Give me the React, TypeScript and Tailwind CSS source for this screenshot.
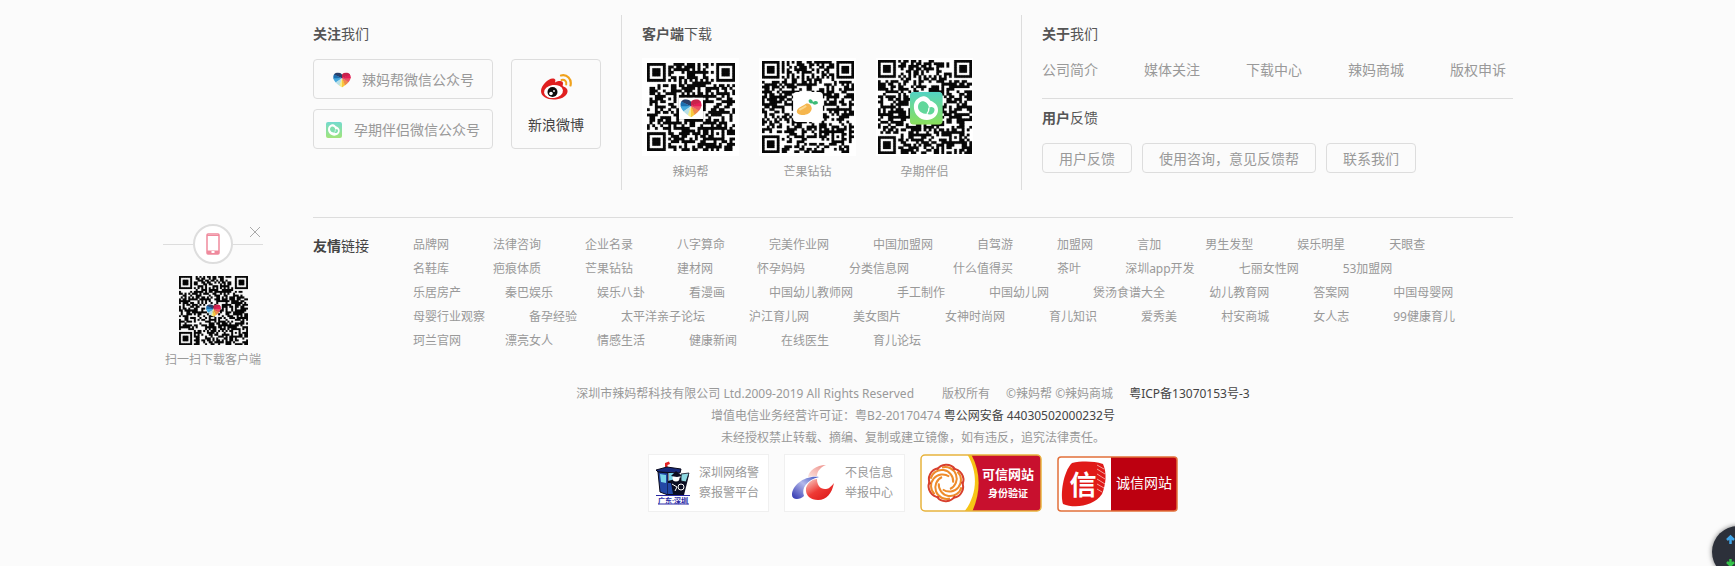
import React from "react";

const friendLinks: string[][] = [
  ["品牌网", "法律咨询", "企业名录", "八字算命", "完美作业网", "中国加盟网", "自驾游", "加盟网", "言加", "男生发型", "娱乐明星", "天眼查"],
  ["名鞋库", "疤痕体质", "芒果钻钻", "建材网", "怀孕妈妈", "分类信息网", "什么值得买", "茶叶", "深圳app开发", "七丽女性网", "53加盟网"],
  ["乐居房产", "秦巴娱乐", "娱乐八卦", "看漫画", "中国幼儿教师网", "手工制作", "中国幼儿网", "煲汤食谱大全", "幼儿教育网", "答案网", "中国母婴网"],
  ["母婴行业观察", "备孕经验", "太平洋亲子论坛", "沪江育儿网", "美女图片", "女神时尚网", "育儿知识", "爱秀美", "村安商城", "女人志", "99健康育儿"],
  ["珂兰官网", "漂亮女人", "情感生活", "健康新闻", "在线医生", "育儿论坛"],
];

/* Builds the module outline of a QR symbol with finders, timing lines and one alignment mark. */
function qrPath(size: number, seed: number): string {
  let state = seed;
  const next = () => {
    state = (state * 1103515245 + 12345) % 2147483648;
    return state / 2147483648;
  };
  const ring = (dx: number, dy: number) => Math.max(Math.abs(dx), Math.abs(dy));
  let d = "";
  for (let y = 0; y < size; y++) {
    for (let x = 0; x < size; x++) {
      let on = next() < 0.53;
      if (x === 6 || y === 6) on = (x + y) % 2 === 0;
      const align = ring(x - (size - 7), y - (size - 7));
      if (align <= 2) on = align !== 1;
      for (const [cx, cy] of [[3, 3], [size - 4, 3], [3, size - 4]]) {
        const r = ring(x - cx, y - cy);
        if (r <= 4) on = r === 3 || r <= 1;
      }
      if (on) d += `M${x} ${y}h1v1h-1z`;
    }
  }
  return d;
}

function Qr({ size, seed, className, children }: { size: number; seed: number; className: string; children: React.ReactNode }) {
  return (
    <svg viewBox={`0 0 ${size} ${size}`} className={className} aria-hidden="true">
      <path d={qrPath(size, seed)} fill="#0a0a0a" stroke="#0a0a0a" strokeWidth="0.100" />
      {children}
    </svg>
  );
}

function HeartShapes({ id }: { id: string }) {
  return (
    <>
      <defs>
        <clipPath id={id}>
          <path d="M12 21C9 19 1.5 14.500 1.500 8.500C1.500 5 4 3 7 3C9 3 11 4 12 5.500C13 4 15 3 17 3C20 3 22.500 5 22.500 8.500C22.500 14.500 15 19 12 21Z" />
        </clipPath>
      </defs>
      <g clipPath={`url(#${id})`}>
        <path d="M12 10V-2H-2V4Z" fill="#2a3f69" />
        <path d="M12 10L-2 3V12Z" fill="#1c6fb0" />
        <path d="M12 10L-2 10V20Z" fill="#45a9de" />
        <path d="M12 10L-2 19V24H8Z" fill="#b9dfe6" />
        <path d="M12 10L7 24H13Z" fill="#f6eb8c" />
        <path d="M12 10L12 24H19Z" fill="#f9c93c" />
        <path d="M12 10L18 24H26V17Z" fill="#f08a4b" />
        <path d="M12 10L26 18V8Z" fill="#ea5265" />
        <path d="M12 10L26 10V2Z" fill="#e51e58" />
        <path d="M12 10V-2H26V4Z" fill="#c8234c" />
      </g>
    </>
  );
}

function PartnerShapes({ id }: { id: string }) {
  return (
    <>
      <defs>
        <linearGradient id={id} x1="0" y1="0" x2="0" y2="1">
          <stop offset="0" stopColor="#52d3c4" />
          <stop offset="1" stopColor="#8be05a" />
        </linearGradient>
      </defs>
      <rect width="24" height="24" rx="3" fill={`url(#${id})`} />
      <path d="M9 3.500C12 2.500 13.500 4.500 15 6.500C18 7.500 21 10 20.500 14C20 18 16.500 20.500 12.500 20.500C7 20.500 3 16 3 11C3 7 5.500 4.500 9 3.500Z" fill="#fff" />
      <path d="M8.500 7C11 6.500 13.500 8.500 14 11.500C15.500 10.500 18 11 18 13C18 16 14.500 17.500 12.500 16C9 16 6 14 6 11C6 9 7 7.500 8.500 7Z" fill="#62d79b" />
      <path d="M14 11.500C14 13.500 13.500 15 12.500 16" fill="none" stroke="#fff" strokeWidth="1" />
    </>
  );
}

function MangoShapes() {
  return (
    <>
      <rect width="24" height="24" rx="3" fill="#fff" />
      <path d="M3 15.500C3.500 12 7 12 10 9.500C12.500 8.500 15 10.500 15 13.500C14.500 17 11 18.500 8 18.500C5 18.500 3 17.500 3 15.500Z" fill="#f5b64e" />
      <path d="M5 14.500C6 13 9 13 10.500 11" stroke="#fad78d" strokeWidth="1.500" fill="none" />
      <path d="M12.500 7C13 5 15.500 5.500 16 8C18 6.500 20 7 20 9C18 11 16 10 15.500 9C14 9.500 12.500 8.500 12.500 7Z" fill="#3dbb78" />
    </>
  );
}

function WeiboIcon() {
  return (
    <svg viewBox="0 0 32 26" className="h-[26px] w-8" aria-hidden="true">
      <path d="M1 17C1 11 9 3.500 13.500 4.500C16 5 15.500 7 15 8.500C19 6.500 23 6.500 23 9.500C23 11 22 12 23.500 12.500C26 13.500 28 15 27.500 18C26.500 23 20 25.500 13.500 25.500C7 25.500 1 22.500 1 17Z" fill="#e02020" />
      <ellipse cx="13.500" cy="17.500" rx="9.500" ry="6.500" transform="rotate(-7 13.500 17.500)" fill="#fff" />
      <circle cx="12.500" cy="18" r="5" fill="#0c0c0c" />
      <circle cx="11" cy="19.500" r="1.800" fill="#fff" />
      <circle cx="14" cy="17" r="0.900" fill="#fff" />
      <path d="M21 1.500C27 0 32 5 30.500 11.500" fill="none" stroke="#f0a21c" strokeWidth="2.200" strokeLinecap="round" />
      <path d="M21.500 6C24.500 5 27 7.500 26.200 10.500" fill="none" stroke="#f0a21c" strokeWidth="2" strokeLinecap="round" />
    </svg>
  );
}

function PoliceIcon() {
  return (
    <svg viewBox="0 0 36 44" className="h-11 w-9 shrink-0" aria-hidden="true">
      <path d="M10 6V2L14 0.500L15 3L12.500 4V7Z" fill="#e32222" />
      <path d="M1 9L12 6L26 8L25 12L3 11Z" fill="#17297a" stroke="#0a0a1c" />
      <path d="M3 11L13 12V34L5 31Z" fill="#2247a5" stroke="#0a0a1c" />
      <path d="M5 13L11 14V22L6 21Z" fill="#79d4e8" />
      <path d="M14 12H21V21H14Z" fill="#79d4e8" />
      <path d="M13 20L34 14L29 34H13Z" fill="#0b0d22" />
      <path d="M26 13L34 12L31 21L26 20Z" fill="#8fd9e2" stroke="#0a0a1c" strokeWidth="0.800" />
      <circle cx="21" cy="17" r="3.500" fill="#fff" />
      <path d="M16 15L21 10L27 15L22 16Z" fill="#0b0d22" />
      <path d="M15 23L22 21L28 26L22 32L15 30Z" fill="#0b0d22" />
      <path d="M13 22H16L18 33H13Z" fill="#2247a5" />
      <circle cx="26" cy="26" r="3" stroke="#fff" strokeWidth="1" fill="none" />
      <path d="M17 23L22 26L20 30" stroke="#fff" strokeWidth="1" fill="none" />
      <path d="M1 34.500H35M3 43H34" stroke="#2929a5" strokeWidth="1" />
      <text x="18" y="41.500" textAnchor="middle" fontSize="7" fontWeight="700" fill="#2929a5">广东·深圳</text>
    </svg>
  );
}

function ReportIcon() {
  return (
    <svg viewBox="0 0 44 38" className="h-[38px] w-11 shrink-0" aria-hidden="true">
      <defs>
        <linearGradient id="report-tip" x1="0" y1="1" x2="1" y2="0">
          <stop offset="0" stopColor="#fbe3df" />
          <stop offset="1" stopColor="#ee8f88" />
        </linearGradient>
        <linearGradient id="report-red" x1="0" y1="0.300" x2="0.600" y2="1">
          <stop offset="0" stopColor="#f6a29b" />
          <stop offset="0.500" stopColor="#ee3a35" />
          <stop offset="1" stopColor="#e0201f" />
        </linearGradient>
        <linearGradient id="report-blue" x1="0" y1="1" x2="1" y2="0">
          <stop offset="0" stopColor="#2a30ae" />
          <stop offset="0.550" stopColor="#b3b8ea" />
          <stop offset="1" stopColor="#3c4fc0" />
        </linearGradient>
      </defs>
      <path d="M35 1C25 1 18 7 17 13L26 12C26 7 30 3 35 1Z" fill="url(#report-tip)" />
      <path d="M15 24C14 32 20 36 27 36C36 36 41 29 43 19C39 24 37 25 34 25C29 25 26 21 26 15C22 15 17 18 15 24Z" fill="url(#report-red)" />
      <path d="M28 13C14 11 1 21 1 31C1 36 9 36 13 32C10 24 16 16 28 13Z" fill="url(#report-blue)" />
    </svg>
  );
}

function TrustedSiteBadge() {
  return (
    <a href="#trusted" aria-label="可信网站身份验证" className="block">
      <svg viewBox="0 0 122 58" className="h-[58px] w-[122px]" aria-hidden="true">
        <defs>
          <clipPath id="trusted-clip"><rect x="1" y="1" width="120" height="56" rx="4" /></clipPath>
        </defs>
        <g clipPath="url(#trusted-clip)">
          <rect width="122" height="58" fill="#c8102e" />
          <path d="M0 0H51C61 18 61 38 52 58H0Z" fill="#f6c416" />
          <path d="M0 0H47C58 18 58 40 44 58H0Z" fill="#fff" />
        </g>
        <rect x="1" y="1" width="120" height="56" rx="4" fill="none" stroke="#e8b43e" strokeWidth="1.500" />
        <g fill="none" strokeWidth="2">
          {[0, 60, 120, 180, 240, 300].map((angle) => (
            <g key={angle} transform={`rotate(${angle} 26 29)`}>
              <path d="M22 13.500A11.500 11.500 0 0 1 30 35" stroke="#ee8b2b" />
              <path d="M17 16A11 11 0 0 1 35 15" stroke="#d8402d" />
            </g>
          ))}
        </g>
        <text x="88" y="25" textAnchor="middle" fontSize="13" fontWeight="700" fill="#fff">可信网站</text>
        <text x="88" y="43" textAnchor="middle" fontSize="10" fontWeight="700" fill="#fff">身份验证</text>
      </svg>
    </a>
  );
}

function HonestSiteBadge() {
  return (
    <a href="#honest" aria-label="诚信网站" className="block">
      <svg viewBox="0 0 121 56" className="h-14 w-[121px]" aria-hidden="true">
        <rect x="1" y="1" width="119" height="54" rx="3" fill="#fff" />
        <path d="M54 1H117Q120 1 120 4V52Q120 55 117 55H54Z" fill="#bd0010" />
        <rect x="1" y="1" width="119" height="54" rx="3" fill="none" stroke="#e2703a" strokeWidth="1.500" />
        <path d="M15 7C25 5 36 5 46 8C50 17 49 28 45 38C37 50 18 53 6 48C3 39 6 16 15 7Z" fill="#e01a18" />
        <path d="M40 9L47 13M40 13L48 18M40 18L48 23M40 23L48 28M40 28L47 32M40 33L45 36" stroke="#f2a09c" strokeWidth="1" />
        <text x="26" y="39" textAnchor="middle" fontSize="27" fontWeight="700" fill="#fff">信</text>
        <text x="87" y="32" textAnchor="middle" fontSize="14" fill="#fff">诚信网站</text>
      </svg>
    </a>
  );
}

function Heading({ strong, rest }: { strong: string; rest: string }) {
  return (
    <h2 className="text-sm leading-5 text-[#555]">
      <b className="font-bold">{strong}</b>
      {rest}
    </h2>
  );
}

function ClientCode({ label, children }: { label: string; children: React.ReactNode }) {
  return (
    <figure className="w-[97px]">
      <div className="flex h-[98px] items-center justify-center bg-white">{children}</div>
      <figcaption className="mt-1.5 text-center leading-5">{label}</figcaption>
    </figure>
  );
}

function SideDownload() {
  return (
    <aside className="mt-[224px] w-[100px] shrink-0">
      <div className="relative flex items-center">
        <span className="h-px flex-1 bg-[#ddd]" />
        <span className="flex size-10 items-center justify-center rounded-full border-2 border-[#ddd] bg-white">
          <svg viewBox="0 0 14 22" className="h-[22px] w-3.5" aria-hidden="true">
            <rect x="1" y="1" width="12" height="20" rx="1" fill="#fff" stroke="#ef8a9d" strokeWidth="1.500" />
            <path d="M1 17.500H13V21H1Z" fill="#ef8a9d" />
            <path d="M1 2.500H13" stroke="#ef8a9d" />
            <rect x="5.500" y="18" width="3" height="2" fill="#fff" />
          </svg>
        </span>
        <span className="h-px flex-1 bg-[#ddd]" />
        <button type="button" aria-label="关闭" className="absolute right-0.5 top-0.5">
          <svg viewBox="0 0 12 12" className="size-3" aria-hidden="true">
            <path d="M1 1L11 11M11 1L1 11" stroke="#aaa" />
          </svg>
        </button>
      </div>
      <Qr size={37} seed={771} className="mx-auto mt-3 size-[69px]">
        <svg x="14" y="14" width="9" height="9" viewBox="0 0 24 24"><HeartShapes id="heart-side" /></svg>
      </Qr>
      <p className="mt-[5px] text-center leading-5">扫一扫下载客户端</p>
    </aside>
  );
}

export default function App() {
  return (
    <div className="min-h-screen overflow-x-hidden bg-[#fbfbfb] font-['Noto_Sans','Noto_Sans_CJK_SC',sans-serif] text-xs text-[#999]">
      <div className="mx-auto flex max-w-[1409px] gap-[50px] pr-[59px]">
        <SideDownload />
        <footer className="min-w-0 flex-1">
          <div className="mt-[15px] flex h-[175px]">
            <section className="w-[308px] shrink-0 pt-[9px]">
              <Heading strong="关注" rest="我们" />
              <div className="mt-[15px] flex gap-[18px] text-sm">
                <div className="flex w-[180px] flex-col gap-2.5">
                  <a href="#lama-wechat" className="flex h-10 items-center justify-center gap-2.5 rounded-sm border border-[#ddd] pt-0.5">
                    <svg viewBox="0 0 24 24" className="size-5" aria-hidden="true"><HeartShapes id="heart-button" /></svg>
                    辣妈帮微信公众号
                  </a>
                  <a href="#partner-wechat" className="flex h-10 items-center justify-center gap-3 rounded-sm border border-[#ddd] pt-0.5">
                    <svg viewBox="0 0 24 24" className="size-4 opacity-80" aria-hidden="true"><PartnerShapes id="partner-button" /></svg>
                    孕期伴侣微信公众号
                  </a>
                </div>
                <a href="#weibo" className="flex h-[90px] w-[90px] flex-col items-center justify-between rounded-sm border border-[#ddd] pb-[13px] pt-3.5 leading-5 text-[#444]">
                  <WeiboIcon />
                  新浪微博
                </a>
              </div>
            </section>

            <section className="w-[400px] shrink-0 border-l border-[#ddd] pl-5 pt-[9px]">
              <Heading strong="客户端" rest="下载" />
              <div className="mt-3.5 flex gap-5">
                <ClientCode label="辣妈帮">
                  <Qr size={33} seed={1234} className="size-[88px]">
                    <rect x="12" y="13" width="9" height="8" fill="#fff" />
                    <svg x="12" y="12.500" width="9" height="9" viewBox="0 0 24 24"><HeartShapes id="heart-code" /></svg>
                  </Qr>
                </ClientCode>
                <ClientCode label="芒果钻钻">
                  <Qr size={37} seed={98765} className="size-[92px]">
                    <svg x="12.500" y="12.500" width="12" height="12" viewBox="0 0 24 24"><MangoShapes /></svg>
                  </Qr>
                </ClientCode>
                <ClientCode label="孕期伴侣">
                  <Qr size={37} seed={45321} className="size-[94px]">
                    <svg x="12.500" y="12.500" width="13" height="13" viewBox="0 0 24 24"><PartnerShapes id="partner-code" /></svg>
                  </Qr>
                </ClientCode>
              </div>
            </section>

            <section className="min-w-0 flex-1 border-l border-[#ddd] pl-5 pt-[9px] text-sm">
              <Heading strong="关于" rest="我们" />
              <nav className="mt-4 flex gap-[46px] whitespace-nowrap leading-5">
                {["公司简介", "媒体关注", "下载中心", "辣妈商城", "版权申诉"].map((label) => (
                  <a key={label} href="#about">{label}</a>
                ))}
              </nav>
              <div className="mt-[18px] border-t border-[#ddd] pt-[9px]">
                <Heading strong="用户" rest="反馈" />
                <div className="mt-[15px] flex gap-2.5">
                  {["用户反馈", "使用咨询，意见反馈帮", "联系我们"].map((label) => (
                    <a key={label} href="#feedback" className="flex h-[30px] items-center whitespace-nowrap rounded-sm border border-[#ddd] px-4 pt-0.5">
                      {label}
                    </a>
                  ))}
                </div>
              </div>
            </section>
          </div>

          <section className="mt-[27px] flex border-t border-[#ddd] pt-[15px]">
            <h2 className="w-[100px] shrink-0 pt-[3px] text-sm leading-5 text-[#444]">
              <b className="font-bold">友情</b>链接
            </h2>
            <ul>
              {friendLinks.map((row) => (
                <li key={row[0]} className="flex gap-11 whitespace-nowrap leading-6">
                  {row.map((label) => (
                    <a key={label} href="#friend">{label}</a>
                  ))}
                </li>
              ))}
            </ul>
          </section>

          <section className="mt-[30px] text-center leading-[22px]">
            <p className="flex justify-center whitespace-pre">
              <span className="mr-7">深圳市辣妈帮科技有限公司 Ltd.2009-2019 All Rights Reserved</span>
              <span className="mr-4">版权所有</span>
              <span className="mr-4">©辣妈帮 ©辣妈商城</span>
              <a href="#icp" className="text-[#444]">粤ICP备13070153号-3</a>
            </p>
            <p>
              增值电信业务经营许可证：粤B2-20170474 <a href="#police-record" className="text-[#444]">粤公网安备 44030502000232号</a>
            </p>
            <p>未经授权禁止转载、摘编、复制或建立镜像，如有违反，追究法律责任。</p>
            <div className="mt-[5px] flex items-end justify-center gap-[15px] text-left leading-5">
              <a href="#police" className="flex h-[58px] w-[121px] items-center gap-2 border border-[#f0f0f0] bg-white pl-1.5">
                <PoliceIcon />
                <span>深圳网络警<br />察报警平台</span>
              </a>
              <a href="#report" className="flex h-[58px] w-[121px] items-center gap-2.5 border border-[#f0f0f0] bg-white pl-1.5">
                <ReportIcon />
                <span>不良信息<br />举报中心</span>
              </a>
              <TrustedSiteBadge />
              <HonestSiteBadge />
            </div>
          </section>
        </footer>
      </div>

      <div className="fixed bottom-[-12px] right-[-29px] size-[52px] rounded-full bg-[#2c303a] shadow-[0_0_5px_#777]" aria-hidden="true">
        <svg viewBox="0 0 52 52" className="size-full">
          <path d="M18.500 18V11M15 14L18.500 10.500L22 14" fill="none" stroke="#42a5e8" strokeWidth="2.500" />
          <path d="M18.500 33V40M15 36L18.500 39.500L22 36" fill="none" stroke="#35c24a" strokeWidth="2.500" />
        </svg>
      </div>
    </div>
  );
}
